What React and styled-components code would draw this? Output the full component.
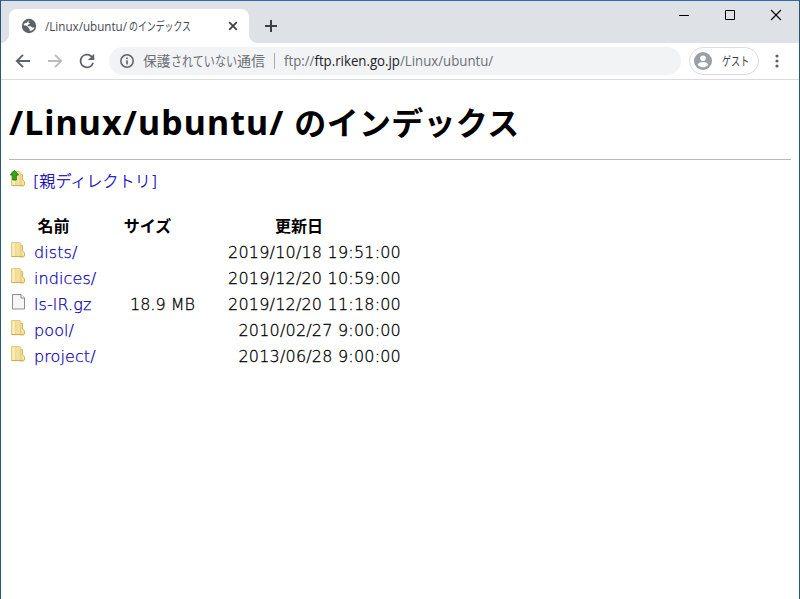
import React from 'react'
import styled, { createGlobalStyle } from 'styled-components'

const GlobalStyle = createGlobalStyle`
  * {
    box-sizing: border-box;
  }
  body {
    margin: 0;
    overflow: hidden;
    background: #fff;
  }
`
const Window = styled.div`
  width: 800px;
  height: 599px;
  display: flex;
  flex-direction: column;
  background: #fff;
  border: 1px solid #2b566f;
  border-top-color: #2e6da4;
  border-bottom: none;
  overflow: hidden;
`
const TitleBar = styled.div`
  height: 42px;
  display: flex;
  align-items: flex-end;
  background: #dee1e6;
  font-family: 'Open Sans', 'Noto Sans CJK JP', sans-serif;
`
const Tab = styled.div`
  position: relative;
  width: 240px;
  height: 34px;
  margin-left: 8px;
  padding: 0 10px 0 12px;
  display: flex;
  align-items: center;
  background: #fff;
  border-radius: 8px 8px 0 0;
  color: #45494d;
  font-size: 12px;
  &::before,
  &::after {
    content: '';
    position: absolute;
    bottom: 0;
    width: 8px;
    height: 8px;
  }
  &::before {
    left: -8px;
    background: radial-gradient(circle at 0 0, #dee1e6 7.5px, #fff 8px);
  }
  &::after {
    right: -8px;
    background: radial-gradient(circle at 100% 0, #dee1e6 7.5px, #fff 8px);
  }
`
const TabTitle = styled.div`
  display: flex;
  align-items: center;
  flex: 1;
  margin-left: 8px;
`
const NewTab = styled.div`
  width: 28px;
  height: 34px;
  margin-left: 8px;
  display: flex;
  align-items: center;
  justify-content: center;
`
const Controls = styled.div`
  align-self: flex-start;
  display: flex;
  height: 28px;
  margin-left: auto;
`
const Control = styled.div`
  width: 46px;
  display: flex;
  align-items: center;
  justify-content: center;
`
const Toolbar = styled.div`
  height: 37px;
  flex: none;
  display: flex;
  align-items: center;
  padding: 0 13px 0 12px;
  border-bottom: 1px solid #d9dbde;
  font-family: 'Open Sans', 'Noto Sans CJK JP', sans-serif;
`
const NavButton = styled.div`
  width: 20px;
  height: 20px;
  margin-right: 12px;
  color: ${props => (props.$disabled ? '#babcbe' : '#5f6368')};
  svg {
    display: block;
  }
`
const AddressBar = styled.div`
  width: 572px;
  height: 28px;
  padding-left: 10px;
  display: flex;
  align-items: center;
  background: #f1f3f4;
  border-radius: 14px;
  color: #6b6f74;
  font-size: 14px;
  line-height: 20px;
`
const Security = styled.div`
  display: flex;
  align-items: center;
  margin-left: 8px;
  padding-right: 8px;
`
const Divider = styled.div`
  width: 1px;
  height: 16px;
  margin-right: 9px;
  background: #a9acb0;
`
const Host = styled.span`
  color: #202124;
`
const Profile = styled.div`
  width: 70px;
  height: 28px;
  margin-left: 8px;
  padding-left: 4px;
  display: flex;
  align-items: center;
  border: 1px solid #dadce0;
  border-radius: 14px;
  color: #3c4043;
  font-size: 12px;
`
const ProfileName = styled.div`
  margin-left: 10px;
`
const MenuButton = styled.div`
  width: 20px;
  height: 20px;
  margin-left: auto;
  margin-right: -1px;
  svg {
    display: block;
  }
`
const Fit = styled.span`
  display: block;
  width: ${props => props.$width}px;
  white-space: nowrap;
  transform: scaleX(${props => props.$scale});
  transform-origin: left center;
`
const Page = styled.main`
  flex: 1;
  padding: 0 8px;
  font-family: 'DejaVu Sans', 'Noto Sans CJK JP', sans-serif;
  font-size: 16px;
  color: #000;
`
const Heading = styled.h1`
  height: 80px;
  margin: 0 0 7px;
  padding-top: 18px;
  border-bottom: 1px solid #b9b9b9;
  font-family: 'Noto Sans', 'Noto Sans CJK JP', sans-serif;
  font-size: 32px;
  line-height: 48px;
  letter-spacing: 0.3px;
  white-space: nowrap;
`
const HeadingPath = styled.span`
  font-size: 34px;
  letter-spacing: 1.1px;
`
const Parent = styled.div`
  height: 28px;
  display: flex;
  align-items: center;
  margin-bottom: 17px;
`
const Listing = styled.div`
  display: grid;
  grid-template-columns: 89px 95px 204px;
  column-gap: 2px;
  grid-auto-rows: 26px;
  align-items: center;
`
const ColumnTitle = styled.div`
  font-family: 'Noto Sans CJK JP', sans-serif;
  font-weight: bold;
  line-height: 26px;
  text-align: center;
`
const NameCell = styled.div`
  display: flex;
  align-items: center;
  padding-top: 2px;
`
const ValueCell = styled.div`
  padding-top: 4px;
  text-align: right;
  font-weight: 300;
  line-height: 26px;
  white-space: pre;
  letter-spacing: ${props => (props.$tight ? 0 : '0.2px')};
  -webkit-text-stroke: 0.3px #000;
`
const FileLink = styled.a`
  margin-left: ${props => props.$gap || 7}px;
  padding-top: 2px;
  color: #0b00b4;
  font-weight: 300;
  line-height: 26px;
  text-decoration: none;
  white-space: nowrap;
  letter-spacing: 0.1px;
  -webkit-text-stroke: 0.25px #0b00b4;
`
const IconBox = styled.span`
  width: 16px;
  height: 16px;
  margin: 0 0 4px 2px;
  flex: none;
  svg {
    display: block;
    overflow: visible;
  }
`

const FolderIcon = ({ up }) => (
  <svg width="16" height="16" viewBox="0 0 16 16">
    <path d="M9 3.500h2.500v5.500l2 1.600v3.400l-1 .8H9z" fill="#f3e3a0" stroke="#cdb050" strokeWidth=".9" />
    <path d="M.500.500h8.500l.8.800v13.200H.500z" fill="#f4e09a" stroke="#dcc67c" strokeWidth=".9" />
    <path d="M1.200 1.200h3v12.800H1.200z" fill="#f9ecb5" />
    <path d="M4.700 1.200v12.800" stroke="#e5cf7f" strokeWidth=".7" />
    <path d="M.500 14.600h12" stroke="#c9aa45" strokeWidth=".9" />
    {up && <path d="M3.500-.700L-.600 4h2.300v5h3.600V4h2.300z" fill="#35a81d" stroke="#167c0c" strokeWidth=".9" />}
  </svg>
)

const FileIcon = () => (
  <svg width="16" height="16" viewBox="0 0 16 16">
    <path d="M1.500.500h8.500l3.500 3.500v11h-12z" fill="#f6f6f6" stroke="#8c8c8c" />
    <path d="M10 .500V4h3.500" fill="#fff" stroke="#8c8c8c" />
  </svg>
)

const files = [
  { name: 'dists/', date: '2019/10/18 19:51:00' },
  { name: 'indices/', date: '2019/12/20 10:59:00' },
  { name: 'ls-lR.gz', size: '18.9 MB', date: '2019/12/20 11:18:00', isFile: true },
  { name: 'pool/', date: '2010/02/27 9:00:00' },
  { name: 'project/', date: '2013/06/28 9:00:00' },
]

const BrowserTabs = () => (
  <TitleBar>
    <Tab>
      <svg width="16" height="16" viewBox="0 0 16 16">
        <circle cx="8" cy="8" r="7.200" fill="#5f6368" />
        <path
          d="M8.300 2.800c-1 .5-1.300 1.300-.7 1.900.5.500 1.300.3 1.200 1-.1.600-1.200.6-1.800 1-.7.500-.3 1.400.4 1.500h2.200c.9.100.8 1.300 1.700 1.300h2.200c-.6 2.100-2.600 3.400-4.900 3.200v-1.500c0-.9-1.200-.8-1.300-1.700-.1-1-1.500-1.300-2.300-2L2.600 7.200c.5-2.700 2.900-4.600 5.700-4.400z"
          fill="#fff"
        />
        <path d="M3.200 5.600c1.400-.6 2.600-.2 3.400-1.300L7 2.200 4 3z" fill="#5f6368" />
      </svg>
      <TabTitle>
        <Fit $width={84} $scale={0.97}>/Linux/ubuntu/</Fit>
        <Fit $width={62} $scale={0.74}>のインデックス</Fit>
      </TabTitle>
      <svg width="12" height="12" viewBox="0 0 12 12">
        <path d="M2.200 2.200l7.600 7.600m0-7.600L2.200 9.800" stroke="#3c4043" strokeWidth="1.700" />
      </svg>
    </Tab>
    <NewTab>
      <svg width="14" height="14" viewBox="0 0 14 14">
        <path d="M7 1v12M1 7h12" stroke="#3c4043" strokeWidth="2" />
      </svg>
    </NewTab>
    <Controls>
      <Control>
        <svg width="12" height="12" viewBox="0 0 12 12"><path d="M1 6.500h10" stroke="#000" /></svg>
      </Control>
      <Control>
        <svg width="12" height="12" viewBox="0 0 12 12"><path d="M1.500 1.500h9v9h-9z" fill="none" stroke="#000" /></svg>
      </Control>
      <Control>
        <svg width="12" height="12" viewBox="0 0 12 12"><path d="M1 1l10 10M11 1L1 11" stroke="#000" strokeWidth="1.100" /></svg>
      </Control>
    </Controls>
  </TitleBar>
)

const BrowserToolbar = () => (
  <Toolbar>
    <NavButton>
      <svg width="20" height="20" viewBox="0 0 20 20">
        <path d="M17 10H4.500M10 3.800L3.800 10l6.200 6.200" fill="none" stroke="currentColor" strokeWidth="1.900" />
      </svg>
    </NavButton>
    <NavButton $disabled>
      <svg width="20" height="20" viewBox="0 0 20 20">
        <path d="M3 10h12.500M10 3.800l6.200 6.200-6.200 6.200" fill="none" stroke="currentColor" strokeWidth="1.900" />
      </svg>
    </NavButton>
    <NavButton>
      <svg width="20" height="20" viewBox="1 1 22 22">
        <path
          d="M17.650 6.350A8 8 0 1 0 19.730 14h-2.080A6 6 0 1 1 12 6c1.660 0 3.140.69 4.220 1.780L13 11h7V4z"
          fill="currentColor"
        />
      </svg>
    </NavButton>
    <AddressBar>
      <svg width="16" height="16" viewBox="0 0 16 16">
        <circle cx="8" cy="8" r="6.200" fill="none" stroke="#5f6368" strokeWidth="1.500" />
        <path d="M8 7.200v4.300M8 4.400v1.600" stroke="#5f6368" strokeWidth="1.600" />
      </svg>
      <Security>
        <Fit $width={28} $scale={0.98}>保護</Fit>
        <Fit $width={66} $scale={0.79}>されていない</Fit>
        <Fit $width={29} $scale={1}>通信</Fit>
      </Security>
      <Divider />
      <Fit $width={210} $scale={0.945}>
        ftp://<Host>ftp.riken.go.jp</Host>/Linux/ubuntu/
      </Fit>
    </AddressBar>
    <Profile>
      <svg width="18" height="18" viewBox="0 0 18 18">
        <circle cx="9" cy="9" r="9" fill="#9aa0a6" />
        <circle cx="9" cy="6.200" r="2.800" fill="#fff" />
        <path d="M3.600 12.600c1-1.700 3.200-2.500 5.400-2.500s4.400.8 5.400 2.500c-1.200 1.800-3.200 2.800-5.400 2.800s-4.200-1-5.400-2.800z" fill="#fff" />
      </svg>
      <ProfileName>
        <Fit $width={28} $scale={0.76}>ゲスト</Fit>
      </ProfileName>
    </Profile>
    <MenuButton>
      <svg width="20" height="20" viewBox="0 0 20 20" fill="#5f6368">
        <circle cx="10" cy="5" r="1.600" />
        <circle cx="10" cy="10" r="1.600" />
        <circle cx="10" cy="15" r="1.600" />
      </svg>
    </MenuButton>
  </Toolbar>
)

const App = () => (
  <Window>
    <GlobalStyle />
    <BrowserTabs />
    <BrowserToolbar />
    <Page>
      <Heading>
        <HeadingPath>/Linux/ubuntu/ </HeadingPath>のインデックス
      </Heading>
      <Parent>
        <IconBox><FolderIcon up /></IconBox>
        <FileLink href="#" $gap={6}>[親ディレクトリ]</FileLink>
      </Parent>
      <Listing>
        <ColumnTitle>名前</ColumnTitle>
        <ColumnTitle>サイズ</ColumnTitle>
        <ColumnTitle>更新日</ColumnTitle>
        {files.map(({ name, size, date, isFile }) => (
          <React.Fragment key={name}>
            <NameCell>
              <IconBox>{isFile ? <FileIcon /> : <FolderIcon />}</IconBox>
              <FileLink href="#">{name}</FileLink>
            </NameCell>
            <ValueCell $tight>{size}</ValueCell>
            <ValueCell>{date}</ValueCell>
          </React.Fragment>
        ))}
      </Listing>
    </Page>
  </Window>
)

export default App
